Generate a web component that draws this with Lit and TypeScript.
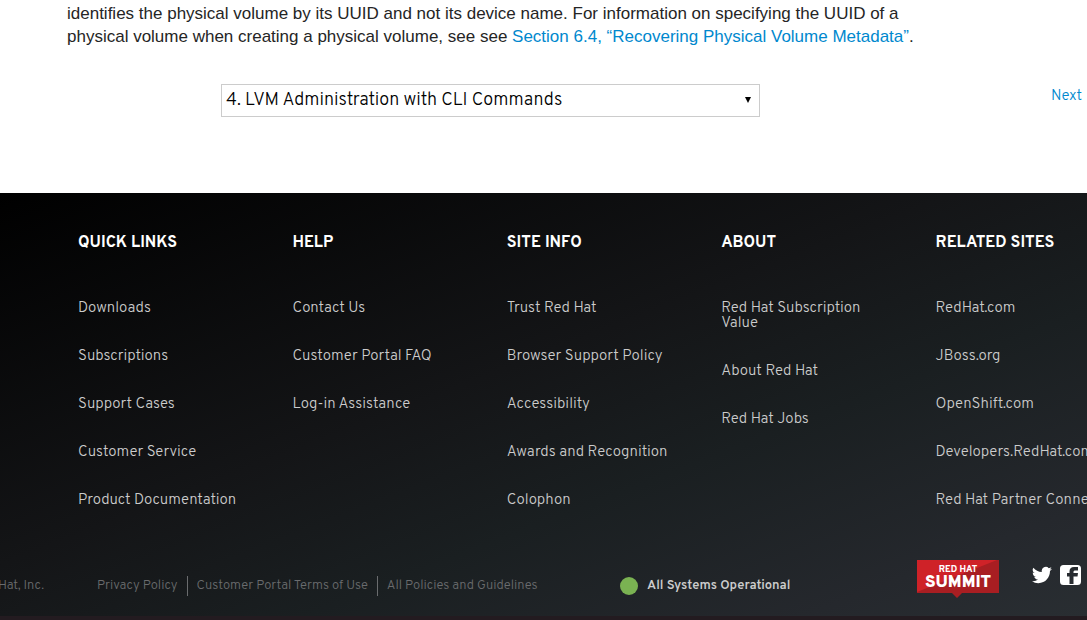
import { LitElement, html, css } from "lit";
import { customElement } from "lit/decorators.js";

interface LinkGroup {
  title: string;
  links: string[];
}

const GROUPS: LinkGroup[] = [
  {
    title: "QUICK LINKS",
    links: ["Downloads", "Subscriptions", "Support Cases", "Customer Service", "Product Documentation"],
  },
  { title: "HELP", links: ["Contact Us", "Customer Portal FAQ", "Log-in Assistance"] },
  {
    title: "SITE INFO",
    links: ["Trust Red Hat", "Browser Support Policy", "Accessibility", "Awards and Recognition", "Colophon"],
  },
  { title: "ABOUT", links: ["Red Hat Subscription Value", "About Red Hat", "Red Hat Jobs"] },
  {
    title: "RELATED SITES",
    links: ["RedHat.com", "JBoss.org", "OpenShift.com", "Developers.RedHat.com", "Red Hat Partner Connect"],
  },
];

const POLICIES = ["Privacy Policy", "Customer Portal Terms of Use", "All Policies and Guidelines"];

@customElement("doc-section")
export class DocSection extends LitElement {
  static styles = css`
    :host {
      display: block;
      font-family: Overpass, Roboto, sans-serif;
    }
    .text {
      max-width: 860px;
      margin: 0;
      padding: 2px 67px 0;
      color: #252525;
      font: 17px/23px "Liberation Sans", Arial, sans-serif;
    }
    a {
      color: #0088ce;
      text-decoration: none;
    }
    .pager {
      display: grid;
      grid-template-columns: 221fr 539fr 322fr;
      align-items: start;
      margin: 36px 5px 0 0;
      padding-bottom: 76px;
    }
    .chapter {
      position: relative;
      grid-column: 2;
    }
    .select {
      appearance: none;
      display: block;
      box-sizing: border-box;
      width: 100%;
      height: 33px;
      padding: 0 24px 0 4px;
      border: 1px solid #ccc;
      border-radius: 0;
      background: #fff;
      color: #000;
      font: 300 18px/24px Overpass, Roboto, sans-serif;
    }
    .arrow {
      position: absolute;
      right: 9px;
      top: 13px;
      width: 6px;
      height: 6px;
      pointer-events: none;
    }
    .next {
      justify-self: end;
      font-size: 15px;
      font-weight: 300;
      line-height: 25px;
    }
  `;

  render() {
    return html`
      <p class="text">
        identifies the physical volume by its UUID and not its device name. For information on
        specifying the UUID of a physical volume when creating a physical volume, see see
        <a href="#metadata">Section 6.4, “Recovering Physical Volume Metadata”</a>.
      </p>
      <nav class="pager">
        <div class="chapter">
          <select class="select" aria-label="Chapter">
            <option>4. LVM Administration with CLI Commands</option>
          </select>
          <svg class="arrow" viewBox="0 0 6 6" aria-hidden="true"><path d="M0 0h6L3 6z" /></svg>
        </div>
        <a class="next" href="#next">Next</a>
      </nav>
    `;
  }
}

@customElement("site-footer")
export class SiteFooter extends LitElement {
  static styles = css`
    :host {
      display: block;
      color: #ccc;
      font-family: Overpass, Roboto, sans-serif;
      background: linear-gradient(to bottom right, #000 0%, #141517 44%, #1a1f21 64%, #25282d 87%, #292e32 100%);
      border-bottom: 4px solid #231b20;
    }
    a {
      color: inherit;
      text-decoration: none;
    }
    .groups {
      display: grid;
      grid-template-columns: repeat(5, 1fr);
      margin-right: -63px;
      padding: 38px 0 0 78px;
    }
    .title {
      margin: 0 0 46px;
      color: #fff;
      font-size: 16px;
      font-weight: 700;
      line-height: 24px;
    }
    .links {
      margin: 0;
      padding: 0;
      list-style: none;
    }
    .item {
      margin-bottom: 33px;
      padding-right: 50px;
      font-size: 15px;
      font-weight: 300;
      line-height: 15px;
    }
    .item.wide {
      padding-right: 0;
      white-space: nowrap;
    }
    .bottom {
      display: grid;
      grid-template-columns: 97px 523px 1fr auto auto;
      align-items: center;
      box-sizing: border-box;
      height: 75px;
      padding: 15px 6px 0 0;
      overflow: hidden;
      font-size: 13px;
      line-height: 20px;
      white-space: nowrap;
    }
    .copyright {
      justify-self: end;
      padding-right: 53px;
      color: #6a6c6e;
      font-weight: 300;
    }
    .policies {
      display: flex;
      margin: 0;
      padding: 0;
      color: #6a6c6e;
      font-weight: 300;
      list-style: none;
    }
    .policy + .policy {
      margin-left: 9px;
      padding-left: 9px;
      border-left: 1px solid #6a6c6e;
    }
    .status {
      display: flex;
      align-items: center;
      gap: 9px;
      font-weight: 600;
    }
    .dot {
      width: 18px;
      height: 18px;
      border-radius: 50%;
      background: #7ab252;
    }
    .summit {
      display: block;
      margin-top: -14px;
    }
    .summit-text {
      fill: #fff;
      font-family: Overpass, "Open Sans", sans-serif;
      font-weight: 900;
      text-anchor: middle;
    }
    .small {
      font-size: 9px;
      font-weight: 800;
    }
    .large {
      font-size: 17px;
    }
    .social {
      display: flex;
      gap: 8px;
      margin: -22px 0 0 33px;
      fill: #fff;
    }
    .icon {
      display: block;
    }
  `;

  render() {
    return html`
      <div class="groups">
        ${GROUPS.map(
          (group, index) => html`
            <nav>
              <h3 class="title">${group.title}</h3>
              <ul class="links">
                ${group.links.map(
                  (link) => html`<li class="item ${index === 3 ? "" : "wide"}"><a href="#">${link}</a></li>`,
                )}
              </ul>
            </nav>
          `,
        )}
      </div>
      <div class="bottom">
        <span class="copyright">Copyright © 2018 Red Hat, Inc.</span>
        <ul class="policies">
          ${POLICIES.map((policy) => html`<li class="policy"><a href="#">${policy}</a></li>`)}
        </ul>
        <a class="status" href="#"><span class="dot"></span>All Systems Operational</a>
        <a href="#" aria-label="Red Hat Summit">
          <svg class="summit" width="82" height="38" viewBox="0 0 82 38">
            <path fill="#a81e22" d="M0 0h82v33H45l-5 5-5-5H0z" />
            <path fill="#cf2228" d="M0 0h80L0 32z" />
            <text class="summit-text small" x="41" y="12">RED HAT</text>
            <text class="summit-text large" x="41" y="27">SUMMIT</text>
          </svg>
        </a>
        <div class="social">
          <a href="#" aria-label="Twitter">
            <svg class="icon" width="20" height="20" viewBox="0 0 24 24">
              <path
                d="M23.95 4.57a10 10 0 0 1-2.82.77 4.96 4.96 0 0 0 2.16-2.72 10 10 0 0 1-3.12 1.19 4.92 4.92 0 0 0-8.38 4.48A13.94 13.94 0 0 1 1.64 3.16a4.92 4.92 0 0 0 1.52 6.57 4.9 4.9 0 0 1-2.23-.61v.06a4.92 4.92 0 0 0 3.95 4.83 5 5 0 0 1-2.21.08 4.94 4.94 0 0 0 4.6 3.42A9.87 9.87 0 0 1 0 19.54a14 14 0 0 0 7.55 2.21c9.05 0 14-7.5 14-13.98 0-.21 0-.42-.02-.63a9.94 9.94 0 0 0 2.46-2.55z"
              />
            </svg>
          </a>
          <a href="#" aria-label="Facebook">
            <svg class="icon" width="21" height="20" viewBox="0 0 21 20">
              <path
                fill-rule="evenodd"
                d="M3.500 0h14A3.500 3.500 0 0 1 21 3.500v13a3.500 3.500 0 0 1-3.500 3.500h-14A3.500 3.500 0 0 1 0 16.500v-13A3.500 3.500 0 0 1 3.500 0zM9.500 19v-7.500H7V8h2.500V6.500C9.500 3.500 11 2 14 2h4v3.500h-2.500c-1.500 0-2 .5-2 1.500v1H18l-.5 3.500h-4V19z"
              />
            </svg>
          </a>
        </div>
      </div>
    `;
  }
}

@customElement("app-root")
export class AppRoot extends LitElement {
  static styles = css`
    :host {
      display: block;
      overflow: hidden;
      background: #fff;
    }
  `;

  render() {
    return html`
      <doc-section></doc-section>
      <site-footer></site-footer>
    `;
  }
}
